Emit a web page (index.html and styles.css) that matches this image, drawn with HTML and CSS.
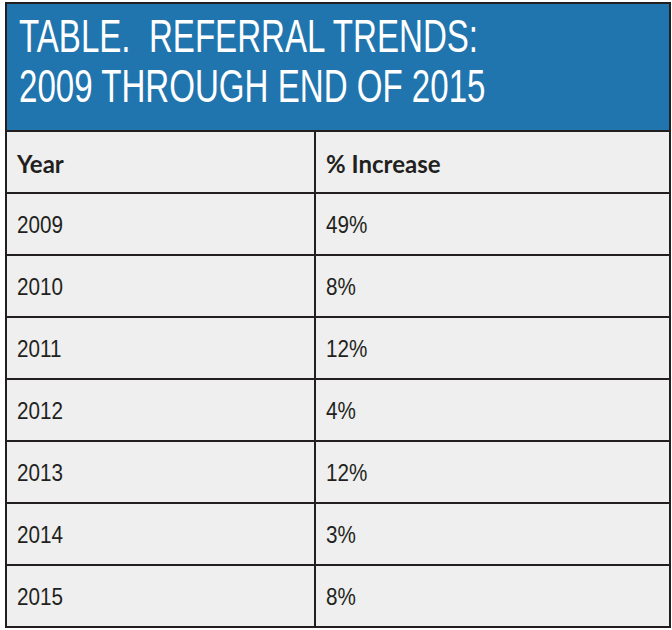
FILE: index.html
```html
<!DOCTYPE html>
<html>
<head>
<meta charset="utf-8">
<link rel="stylesheet" href="styles.css">
</head>
<body>
<div class="frame">
  <div class="title">
    <div class="title-line"><span class="squeeze-title">TABLE.&nbsp; REFERRAL TRENDS:</span></div>
    <div class="title-line"><span class="squeeze-title">2009 THROUGH END OF 2015</span></div>
  </div>
  <div class="grid">
    <div class="cell head">Year</div>
    <div class="cell head right">% Increase</div>
    <div class="cell"><span class="t">2009</span></div><div class="cell right"><span class="t">49%</span></div>
    <div class="cell"><span class="t">2010</span></div><div class="cell right"><span class="t">8%</span></div>
    <div class="cell"><span class="t">2011</span></div><div class="cell right"><span class="t">12%</span></div>
    <div class="cell"><span class="t">2012</span></div><div class="cell right"><span class="t">4%</span></div>
    <div class="cell"><span class="t">2013</span></div><div class="cell right"><span class="t">12%</span></div>
    <div class="cell"><span class="t">2014</span></div><div class="cell right"><span class="t">3%</span></div>
    <div class="cell"><span class="t">2015</span></div><div class="cell right"><span class="t">8%</span></div>
  </div>
</div>
</body>
</html>
```
FILE: styles.css
```css
html, body {
  margin: 0;
  padding: 0;
  background: #ffffff;
}
body {
  padding: 2px 0 0 5px;
}
.frame {
  width: 666px;
  box-sizing: border-box;
  border: 2px solid #231f20;
  background: #eeefee;
}
.title {
  background: #2175ae;
  height: 126px;
  box-sizing: border-box;
  padding: 7px 0 0 12px;
  color: #ffffff;
  font-family: "Liberation Sans", Arial, sans-serif;
  font-size: 47px;
  line-height: 50px;
}
.title-line {
  white-space: nowrap;
  height: 50px;
}
.squeeze-title {
  display: inline-block;
  transform: scaleX(0.704);
  transform-origin: left center;
}
.grid {
  display: grid;
  grid-template-columns: 307px 1fr;
  border-top: 2px solid #231f20;
}
.cell {
  height: 62px;
  box-sizing: border-box;
  border-bottom: 2px solid #231f20;
  display: flex;
  align-items: center;
  padding: 2px 0 0 10px;
  font-family: "Liberation Sans", Arial, sans-serif;
  font-size: 24px;
  color: #231f20;
  white-space: nowrap;
}
.cell:nth-last-child(-n+2) {
  border-bottom: none;
  height: 60px;
}
.t {
  display: inline-block;
  transform: scaleX(0.86);
  transform-origin: left center;
}
.right {
  border-left: 2px solid #231f20;
}
.head {
  font-family: "Lato", sans-serif;
  font-weight: bold;
  font-size: 24px;
}
```
